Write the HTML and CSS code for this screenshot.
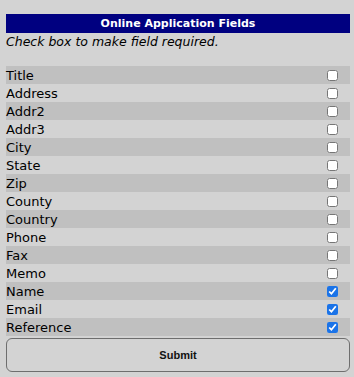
FILE: index.html
```html
<!DOCTYPE html>
<html lang="en">
<head>
  <meta charset="UTF-8">
  <title>Online Application Fields</title>
  <link rel="stylesheet" href="styles.css">
</head>
<body>
  <div class="panel">
    <div class="title">Online Application Fields</div>
    <div class="hint">Check box to make field required.</div>

    <div class="fields">
      <label class="row"><span>Title</span><input type="checkbox"></label>
      <label class="row"><span>Address</span><input type="checkbox"></label>
      <label class="row"><span>Addr2</span><input type="checkbox"></label>
      <label class="row"><span>Addr3</span><input type="checkbox"></label>
      <label class="row"><span>City</span><input type="checkbox"></label>
      <label class="row"><span>State</span><input type="checkbox"></label>
      <label class="row"><span>Zip</span><input type="checkbox"></label>
      <label class="row"><span>County</span><input type="checkbox"></label>
      <label class="row"><span>Country</span><input type="checkbox"></label>
      <label class="row"><span>Phone</span><input type="checkbox"></label>
      <label class="row"><span>Fax</span><input type="checkbox"></label>
      <label class="row"><span>Memo</span><input type="checkbox"></label>
      <label class="row"><span>Name</span><input type="checkbox" checked></label>
      <label class="row"><span>Email</span><input type="checkbox" checked></label>
      <label class="row"><span>Reference</span><input type="checkbox" checked></label>
    </div>

    <button class="submit">Submit</button>
  </div>
</body>
</html>
```

FILE: styles.css
```css
body {
  margin: 0;
  background: #d3d3d3;
  font-family: "DejaVu Sans", sans-serif;
  color: #000;
}

.panel {
  margin: 14px 4px 0 6px;
}

.title {
  background: #000080;
  color: #fff;
  font-weight: bold;
  font-size: 11px;
  text-align: center;
  height: 19px;
  line-height: 19px;
}

.hint {
  font-style: italic;
  font-size: 12.5px;
  line-height: 17px;
  margin-bottom: 16px;
}

.fields {
  display: flex;
  flex-direction: column;
}

.row {
  display: flex;
  align-items: center;
  justify-content: space-between;
  height: 18px;
  font-size: 13px;
}

.row:nth-child(odd) {
  background: #c0c0c0;
}

.row input {
  width: 11px;
  height: 11px;
  margin: 1px 12px 0 0;
  accent-color: #1a73e8;
}

.submit {
  display: block;
  width: 100%;
  height: 34px;
  margin-top: 2px;
  background: #d3d3d3;
  border: 1px solid #6e6e6e;
  border-radius: 6px;
  font-family: "Liberation Sans", sans-serif;
  font-weight: bold;
  font-size: 11px;
  color: #111;
}
```
